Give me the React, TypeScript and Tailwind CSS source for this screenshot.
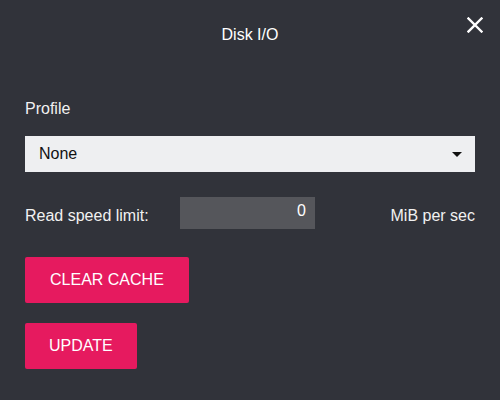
export default function App() {
  return (
    <div className="w-[500px] h-[400px] bg-[#31333a] px-[25px] flex flex-col font-['Liberation_Sans',Arial,sans-serif] text-[16px] text-[#f1f1f1]">
      {/* Header */}
      <div className="relative h-[70px] flex items-center justify-center">
        <span className="text-white">Disk I/O</span>
        <button className="absolute right-[-8px] top-[17px] w-4 h-4 text-white">
          <svg viewBox="0 0 16 16" width="16" height="16" fill="none" stroke="currentColor" strokeWidth="2.4" strokeLinecap="square">
            <path d="M1.5 1.5 L14.5 14.5 M14.5 1.5 L1.5 14.5" />
          </svg>
        </button>
      </div>

      <label className="mt-[27px] leading-6">Profile</label>
      <div className="mt-[15px] h-9 bg-[#eeeff1] flex items-center pl-[14px] pr-[13px] text-[#111]">
        <span>None</span>
        <svg className="ml-auto" width="10" height="5" viewBox="0 0 10 5">
          <path d="M0 0 H10 L5 5 Z" fill="#111" />
        </svg>
      </div>

      {/* Read speed */}
      <div className="mt-[25px] flex items-end">
        <span className="w-[155px] leading-6 pb-[1px]">Read speed limit:</span>
        <input
          readOnly
          value="0"
          className="w-[135px] h-8 bg-[#55565b] text-right pr-[9px] pb-[5px] text-white outline-none"
        />
        <span className="ml-auto leading-6 pb-[1px]">MiB per sec</span>
      </div>

      <div className="mt-[28px] flex">
        <button className="h-[46px] px-[25px] rounded-[2px] bg-[#e61a5f] text-white">CLEAR CACHE</button>
      </div>
      <div className="mt-[20px] flex">
        <button className="h-[46px] px-[24px] rounded-[2px] bg-[#e61a5f] text-white">UPDATE</button>
      </div>
    </div>
  );
}
